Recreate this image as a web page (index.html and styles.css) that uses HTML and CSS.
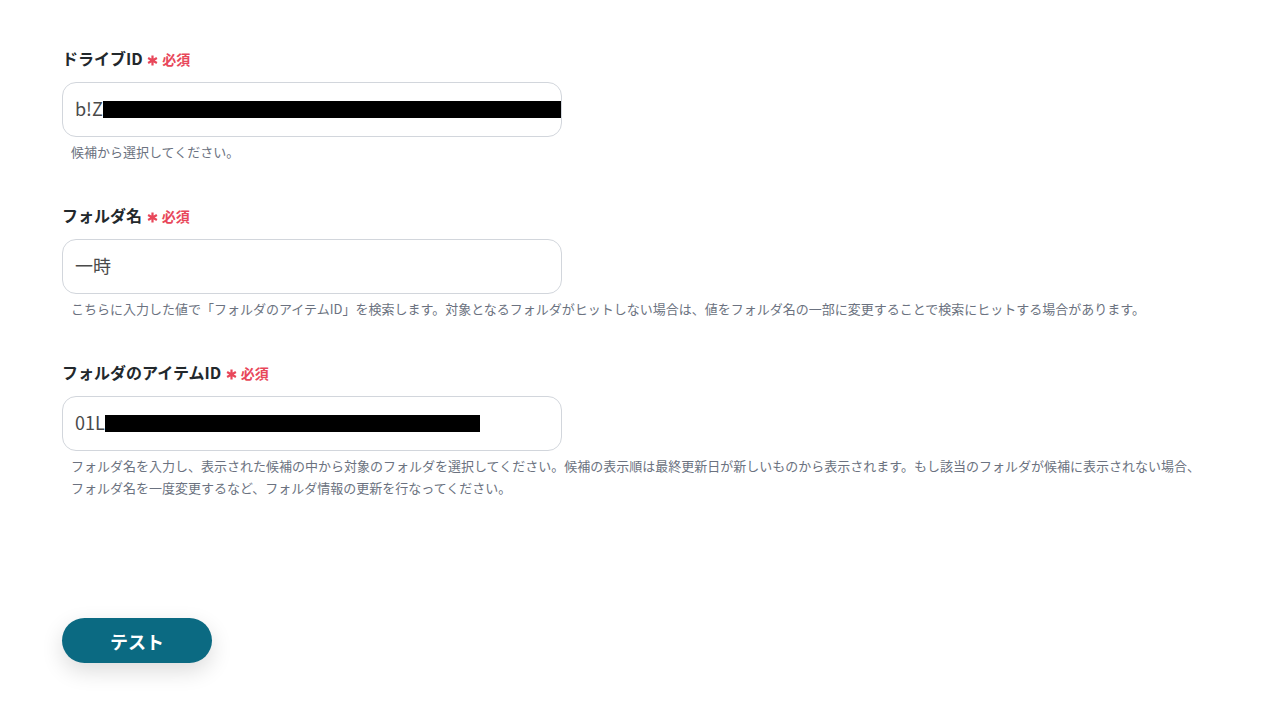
FILE: index.html
```html
<!DOCTYPE html>
<html lang="ja">
<head>
    <meta charset="UTF-8">
    <meta name="viewport" content="width=device-width, initial-scale=1.0">
    <title>フォルダ設定</title>
    <link rel="stylesheet" href="styles.css">
</head>
<body>

<div class="form">
    <div class="field">
        <div class="label">ドライブID <span class="required"><svg class="star" viewBox="0 0 12 12"><path d="M6 0.5v11M1.2 3.2l9.6 5.6M1.2 8.8l9.6-5.6"/></svg>必須</span></div>
        <div class="input">b!Z<span class="mask mask-long"></span></div>
        <div class="hint">候補から選択してください。</div>
    </div>

    <div class="field">
        <div class="label">フォルダ名 <span class="required"><svg class="star" viewBox="0 0 12 12"><path d="M6 0.5v11M1.2 3.2l9.6 5.6M1.2 8.8l9.6-5.6"/></svg>必須</span></div>
        <div class="input">一時</div>
        <div class="hint">こちらに入力した値で「フォルダのアイテムID」を検索します。対象となるフォルダがヒットしない場合は、値をフォルダ名の一部に変更することで検索にヒットする場合があります。</div>
    </div>

    <div class="field">
        <div class="label">フォルダのアイテムID <span class="required"><svg class="star" viewBox="0 0 12 12"><path d="M6 0.5v11M1.2 3.2l9.6 5.6M1.2 8.8l9.6-5.6"/></svg>必須</span></div>
        <div class="input">01L<span class="mask mask-short"></span></div>
        <div class="hint">フォルダ名を入力し、表示された候補の中から対象のフォルダを選択してください。候補の表示順は最終更新日が新しいものから表示されます。もし該当のフォルダが候補に表示されない場合、<br>フォルダ名を一度変更するなど、フォルダ情報の更新を行なってください。</div>
    </div>

    <button class="test-button">テスト</button>
</div>

</body>
</html>
```

FILE: styles.css
```css
body {
    font-family: "Noto Sans CJK JP", "Noto Sans", sans-serif;
    margin: 0;
    padding: 0;
    background-color: #fff;
    color: #283237;
}
.form {
    padding: 47px 0 40px 62px;
    width: 1200px;
}
.field {
    margin-bottom: 41px;
}
.label {
    font-size: 16px;
    font-weight: bold;
    line-height: 22px;
    color: #22282c;
}
.required {
    color: #e8475a;
    font-size: 14px;
}
.star {
    width: 11px;
    height: 11px;
    margin: 0 4px 0 1px;
    vertical-align: -1px;
    fill: none;
    stroke: #e8475a;
    stroke-width: 2.4;
}
.input {
    display: flex;
    align-items: center;
    box-sizing: border-box;
    width: 500px;
    height: 55px;
    margin-top: 12px;
    padding: 0 0 3px 12px;
    border: 1px solid #d2d6dc;
    border-radius: 14px;
    font-size: 18px;
    color: #4a4a4a;
    overflow: hidden;
}
.mask {
    display: inline-block;
    height: 17px;
    margin-top: 2px;
    background: #000;
}
.mask-long {
    flex-grow: 1;
}
.mask-short {
    width: 375px;
}
.hint {
    margin: 4px 0 0 9px;
    font-size: 13px;
    line-height: 22px;
    color: #6b7280;
}
.test-button {
    margin-top: 78px;
    width: 150px;
    height: 45px;
    border: none;
    border-radius: 23px;
    background: #0b6a82;
    color: #fff;
    font-family: inherit;
    font-size: 18px;
    font-weight: bold;
    box-shadow: 0 8px 22px rgba(0, 0, 0, 0.14);
}
```
